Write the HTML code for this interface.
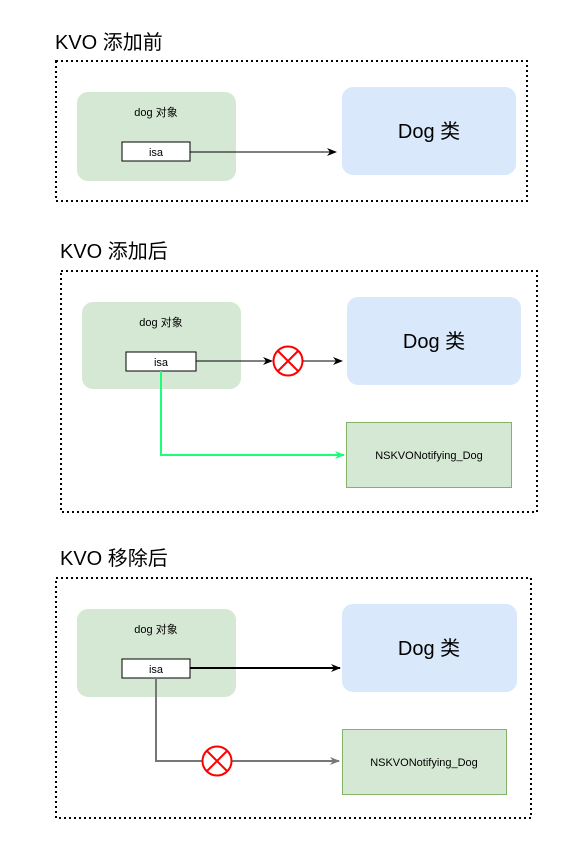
<!DOCTYPE html>
<html><head><style>body{margin:0;background:#fff}svg{display:block}</style></head>
<body>
<svg width="587" height="862" xmlns="http://www.w3.org/2000/svg" font-family="'Liberation Sans','Noto Sans CJK SC',sans-serif">
<defs>
<marker id="a" markerWidth="10" markerHeight="10" refX="9" refY="5" orient="auto" markerUnits="userSpaceOnUse"><path d="M0,1 L10,5 L0,9 L3,5z" fill="#000"/></marker>
<marker id="g" markerWidth="10" markerHeight="10" refX="9" refY="5" orient="auto" markerUnits="userSpaceOnUse"><path d="M0,1 L10,5 L0,9 L3,5z" fill="#1aff7a"/></marker>
<marker id="gr" markerWidth="10" markerHeight="10" refX="9" refY="5" orient="auto" markerUnits="userSpaceOnUse"><path d="M0,1 L10,5 L0,9 L3,5z" fill="#777"/></marker>
</defs>
<g fill="none" stroke="#000" stroke-width="2" stroke-dasharray="2 3">
<rect x="56" y="61" width="471" height="140"/>
<rect x="61" y="271" width="476" height="241"/>
<rect x="56" y="578" width="475" height="240"/>
</g>
<g font-size="20" fill="#000">
<text x="55" y="49">KVO 添加前</text>
<text x="60" y="258">KVO 添加后</text>
<text x="60" y="565">KVO 移除后</text>
</g>
<!-- section 1 -->
<rect x="77" y="92" width="159" height="89" rx="11" fill="#d5e8d4"/>
<text x="156" y="116" font-size="11" text-anchor="middle">dog 对象</text>
<rect x="122" y="142" width="68" height="19" fill="#fff" stroke="#000"/>
<text x="156" y="156" font-size="11" text-anchor="middle">isa</text>
<line x1="190" y1="152" x2="336" y2="152" stroke="#000" marker-end="url(#a)"/>
<rect x="342" y="87" width="174" height="88" rx="11" fill="#dae8fc"/>
<text x="429" y="138" font-size="20" text-anchor="middle">Dog 类</text>
<!-- section 2 -->
<rect x="82" y="302" width="159" height="87" rx="11" fill="#d5e8d4"/>
<text x="161" y="326" font-size="11" text-anchor="middle">dog 对象</text>
<rect x="126" y="352" width="70" height="19" fill="#fff" stroke="#000"/>
<text x="161" y="366" font-size="11" text-anchor="middle">isa</text>
<line x1="196" y1="361" x2="272" y2="361" stroke="#000" marker-end="url(#a)"/>
<circle cx="288" cy="361" r="14.5" fill="#fff" stroke="#f00" stroke-width="2"/>
<path d="M278,351 L298,371 M298,351 L278,371" stroke="#f00" stroke-width="2"/>
<line x1="303" y1="361" x2="342" y2="361" stroke="#000" marker-end="url(#a)"/>
<rect x="347" y="297" width="174" height="88" rx="11" fill="#dae8fc"/>
<text x="434" y="348" font-size="20" text-anchor="middle">Dog 类</text>
<polyline points="161,371 161,455 344,455" fill="none" stroke="#1aff7a" stroke-width="2" marker-end="url(#g)"/>
<rect x="346.5" y="422.5" width="165" height="65" fill="#d5e8d4" stroke="#82b366"/>
<text x="429" y="459" font-size="11" text-anchor="middle">NSKVONotifying_Dog</text>
<!-- section 3 -->
<rect x="77" y="609" width="159" height="88" rx="11" fill="#d5e8d4"/>
<text x="156" y="633" font-size="11" text-anchor="middle">dog 对象</text>
<rect x="122" y="659" width="68" height="19" fill="#fff" stroke="#000"/>
<text x="156" y="673" font-size="11" text-anchor="middle">isa</text>
<line x1="190" y1="668" x2="340" y2="668" stroke="#000" stroke-width="2" marker-end="url(#a)"/>
<rect x="342" y="604" width="175" height="88" rx="11" fill="#dae8fc"/>
<text x="429" y="655" font-size="20" text-anchor="middle">Dog 类</text>
<polyline points="156,678 156,761 339,761" fill="none" stroke="#777" stroke-width="2" marker-end="url(#gr)"/>
<circle cx="217" cy="761" r="14.5" fill="#fff" stroke="#f00" stroke-width="2"/>
<path d="M207,751 L227,771 M227,751 L207,771" stroke="#f00" stroke-width="2"/>
<rect x="342.5" y="729.5" width="164" height="65" fill="#d5e8d4" stroke="#82b366"/>
<text x="424" y="766" font-size="11" text-anchor="middle">NSKVONotifying_Dog</text>
</svg>
</body></html>
